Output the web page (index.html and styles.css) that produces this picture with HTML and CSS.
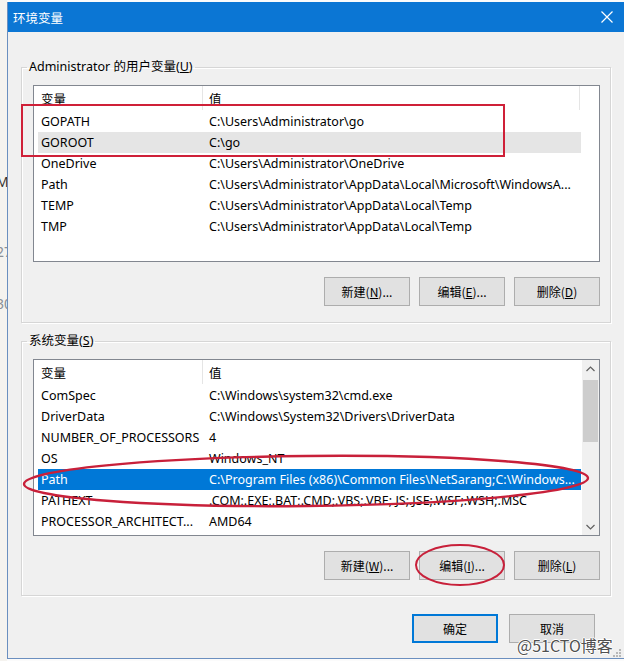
FILE: index.html
```html
<!DOCTYPE html>
<html lang="zh-CN">
<head>
<meta charset="utf-8">
<title>环境变量</title>
<link rel="stylesheet" href="styles.css">
</head>
<body>
<div class="screen">
  <div class="desk">
    <span class="frag f1">Mc</span>
    <span class="frag f2">27</span>
    <span class="frag f3">30</span>
  </div>
  <div class="window">
    <div class="titlebar">
      <span class="title">环境变量</span>
      <svg class="close" width="12" height="12" viewBox="0 0 12 12"><path d="M0.5 0.5 L11.5 11.5 M11.5 0.5 L0.5 11.5" stroke="#fff" stroke-width="1.2" fill="none"/></svg>
    </div>
    <div class="content">
      <fieldset class="group">
        <legend>Administrator 的用户变量(<u>U</u>)</legend>
        <div class="list list-user">
          <div class="list-main">
            <div class="list-head"><div class="c1">变量</div><div class="c2">值</div></div>
            <div class="row"><div class="c1">GOPATH</div><div class="c2">C:\Users\Administrator\go</div></div>
            <div class="row hover"><div class="c1">GOROOT</div><div class="c2">C:\go</div></div>
            <div class="row"><div class="c1">OneDrive</div><div class="c2">C:\Users\Administrator\OneDrive</div></div>
            <div class="row"><div class="c1">Path</div><div class="c2">C:\Users\Administrator\AppData\Local\Microsoft\WindowsA...</div></div>
            <div class="row"><div class="c1">TEMP</div><div class="c2">C:\Users\Administrator\AppData\Local\Temp</div></div>
            <div class="row"><div class="c1">TMP</div><div class="c2">C:\Users\Administrator\AppData\Local\Temp</div></div>
          </div>
        </div>
        <div class="btns">
          <button class="btn">新建(<u>N</u>)...</button>
          <button class="btn">编辑(<u>E</u>)...</button>
          <button class="btn">删除(<u>D</u>)</button>
        </div>
      </fieldset>

      <fieldset class="group group2">
        <legend>系统变量(<u>S</u>)</legend>
        <div class="list list-sys">
          <div class="list-main">
            <div class="list-head"><div class="c1">变量</div><div class="c2 nolast">值</div></div>
            <div class="row"><div class="c1">ComSpec</div><div class="c2">C:\Windows\system32\cmd.exe</div></div>
            <div class="row"><div class="c1">DriverData</div><div class="c2">C:\Windows\System32\Drivers\DriverData</div></div>
            <div class="row"><div class="c1">NUMBER_OF_PROCESSORS</div><div class="c2">4</div></div>
            <div class="row"><div class="c1">OS</div><div class="c2">Windows_NT</div></div>
            <div class="row selected"><div class="c1">Path</div><div class="c2">C:\Program Files (x86)\Common Files\NetSarang;C:\Windows...</div></div>
            <div class="row"><div class="c1">PATHEXT</div><div class="c2">.COM;.EXE;.BAT;.CMD;.VBS;.VBE;.JS;.JSE;.WSF;.WSH;.MSC</div></div>
            <div class="row"><div class="c1">PROCESSOR_ARCHITECT...</div><div class="c2">AMD64</div></div>
          </div>
          <div class="scrollbar">
            <div class="arrow">
              <svg width="9" height="6" viewBox="0 0 9 6"><path d="M0.5 5 L4.5 1 L8.5 5" stroke="#606060" stroke-width="1.2" fill="none"/></svg>
            </div>
            <div class="track"><div class="thumb"></div></div>
            <div class="arrow">
              <svg width="9" height="6" viewBox="0 0 9 6"><path d="M0.5 1 L4.5 5 L8.5 1" stroke="#606060" stroke-width="1.2" fill="none"/></svg>
            </div>
          </div>
        </div>
        <div class="btns">
          <button class="btn">新建(<u>W</u>)...</button>
          <button class="btn">编辑(<u>I</u>)...</button>
          <button class="btn">删除(<u>L</u>)</button>
        </div>
      </fieldset>

      <div class="footer">
        <button class="btn primary">确定</button>
        <button class="btn">取消</button>
      </div>
    </div>
  </div>

  <svg class="marks" width="624" height="661" viewBox="0 0 624 661">
    <rect x="22" y="105" width="482" height="51" fill="none" stroke="#cf2038" stroke-width="2"/>
    <ellipse cx="306" cy="481" rx="282" ry="25" transform="rotate(-0.6 306 481)" fill="none" stroke="#c8203a" stroke-width="2.4"/>
    <ellipse cx="460" cy="565" rx="44" ry="20" fill="none" stroke="#c8203a" stroke-width="2"/>
  </svg>
  <div class="watermark">@51CTO博客</div>
  <svg class="grip" width="8" height="8" viewBox="0 0 8 8">
    <rect x="6" y="0" width="2" height="2" fill="#b8b8b8"/>
    <rect x="3" y="3" width="2" height="2" fill="#b8b8b8"/>
    <rect x="6" y="3" width="2" height="2" fill="#b8b8b8"/>
    <rect x="0" y="6" width="2" height="2" fill="#b8b8b8"/>
    <rect x="3" y="6" width="2" height="2" fill="#b8b8b8"/>
    <rect x="6" y="6" width="2" height="2" fill="#b8b8b8"/>
  </svg>
</div>
</body>
</html>
```

FILE: styles.css
```css
* { box-sizing: border-box; }
html, body { margin: 0; padding: 0; }
body {
  width: 624px;
  height: 661px;
  overflow: hidden;
  background: #f6f4f1;
  font-family: "Noto Sans", "Noto Sans CJK SC", sans-serif;
  font-size: 12.5px;
  color: #000;
}
.screen {
  position: relative;
  width: 624px;
  height: 661px;
  overflow: hidden;
  display: flex;
  padding-top: 2px;
  background: #fbfbfb;
}
.desk {
  width: 7px;
  flex: none;
  background: #f5f3ef;
  display: flex;
  flex-direction: column;
  overflow: hidden;
  margin-top: -2px;
}
.frag {
  color: #8a8f96;
  font-size: 14px;
  line-height: 16px;
  margin-left: -4px;
  white-space: nowrap;
}
.f1 { margin-top: 174px; color: #333; }
.f2 { margin-top: 54px; }
.f3 { margin-top: 36px; }

.window {
  flex: none;
  width: 640px;
  height: 657px;
  background: #f0f0f0;
  border-left: 1px solid #6b8fbf;
  border-bottom: 1px solid #6b8fbf;
  display: flex;
  flex-direction: column;
}
.titlebar {
  height: 30px;
  background: #0b76d4;
  display: flex;
  align-items: center;
  padding-left: 5px;
  padding-right: 34px;
  flex: none;
}
.title {
  flex: 1;
  color: #fff;
  font-family: "Noto Sans CJK SC", sans-serif;
  font-size: 12.5px;
  white-space: nowrap;
}
.close {
  flex: none;
}
.content {
  padding: 27px 0 0 13px;
  display: flex;
  flex-direction: column;
}
.group {
  width: 590px;
  margin: 0;
  padding: 10px 10px 16px 11px;
  border: 1px solid #d6d6d6;
  box-shadow: inset 1px 1px 0 #fff, 1px 1px 0 #fff;
  min-inline-size: 0;
}
.group legend {
  margin-left: -6px;
  padding: 0 2px;
  line-height: 16px;
  height: 16px;
  font-family: "Noto Sans", "Noto Sans CJK SC", sans-serif;
}
.group2 {
  margin-top: 10px;
  padding-top: 10px;
  padding-bottom: 15px;
}
u { text-decoration: underline; text-underline-offset: 1px; }

.list {
  border: 1px solid #828790;
  background: #fff;
  display: flex;
  width: 567px;
}
.list-user { height: 177px; }
.list-sys { height: 177px; }
.list-main {
  flex: 1;
  padding-left: 4px;
  overflow: hidden;
}
.list-head {
  display: flex;
  height: 25px;
  align-items: stretch;
  padding-bottom: 1px;
}
.list-head .c1, .list-head .c2 {
  display: flex;
  align-items: center;
}
.list-head .c2 {
  border-left: 1px solid #e5e5e5;
  border-right: 1px solid #e5e5e5;
  padding-left: 6px;
}
.list-head .c2.nolast { border-right: none; }
.c1 {
  width: 164px;
  flex: none;
  padding-left: 3px;
  white-space: nowrap;
  overflow: hidden;
}
.c2 {
  width: 378px;
  flex: none;
  padding-left: 7px;
  white-space: nowrap;
  overflow: hidden;
}
.row {
  display: flex;
  height: 21px;
  align-items: center;
  width: 543px;
}
.row.hover { background: #e5e5e5; }
.row.selected { background: #0078d7; color: #fff; }

.scrollbar {
  width: 17px;
  flex: none;
  background: #f0f0f0;
  display: flex;
  flex-direction: column;
}
.arrow {
  height: 17px;
  display: flex;
  align-items: center;
  justify-content: center;
  flex: none;
}
.track {
  flex: 1;
  padding: 3px 1px 0;
}
.thumb {
  height: 62px;
  background: #cdcdcd;
}

.btns {
  display: flex;
  justify-content: flex-end;
  gap: 9px;
  margin-top: 15px;
  padding-right: 0;
}
.btn {
  width: 86px;
  height: 29px;
  background: #e1e1e1;
  border: 1px solid #adadad;
  font-family: "Noto Sans CJK SC", "Noto Sans", sans-serif;
  font-size: 12px;
  color: #000;
  padding: 0;
  margin: 0;
}
.btn.primary {
  border: 2px solid #0078d7;
}
.footer {
  width: 590px;
  display: flex;
  justify-content: flex-end;
  gap: 11px;
  padding-right: 16px;
  margin-top: 18px;
}

.marks {
  position: absolute;
  left: 0;
  top: 0;
  pointer-events: none;
}
.watermark {
  position: absolute;
  left: 517px;
  top: 634px;
  font-family: "Noto Sans CJK SC", sans-serif;
  font-size: 16px;
  line-height: 22px;
  color: #505050;
  text-shadow: 1px 0 0 #fff, -1px 0 0 #fff, 0 1px 0 #fff, 0 -1px 0 #fff;
  white-space: nowrap;
}
.grip {
  position: absolute;
  left: 613px;
  top: 649px;
}
```
